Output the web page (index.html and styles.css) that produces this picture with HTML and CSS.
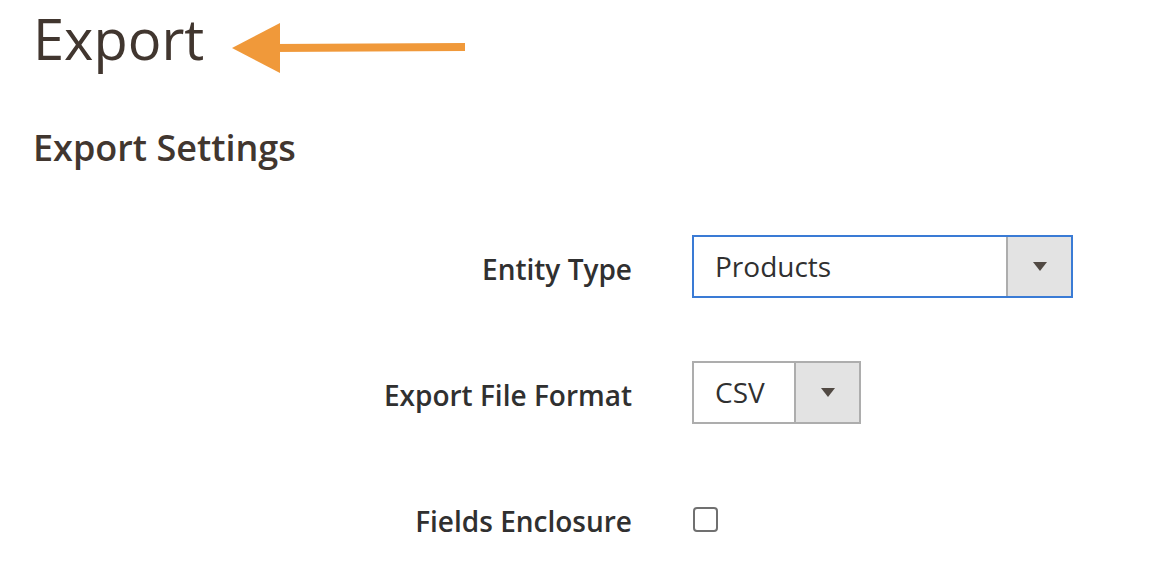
FILE: index.html
```html
<!DOCTYPE html>
<html lang="en">
<head>
    <meta charset="UTF-8">
    <title>Export</title>
    <link rel="stylesheet" href="styles.css">
</head>
<body>

<div class="page">
    <div class="page-header">
        <h1 class="page-title">Export</h1>
        <svg class="pointer" width="240" height="52" viewBox="0 0 240 52">
            <line x1="40" y1="25" x2="233" y2="24" stroke="#f0993a" stroke-width="8"/>
            <polygon points="0,25 48,0 48,50" fill="#f0993a"/>
        </svg>
    </div>

    <h2 class="legend">Export Settings</h2>

    <div class="fieldset">
        <div class="field">
            <label class="label">Entity Type</label>
            <div class="control">
                <div class="select select-wide focused">
                    <span class="select-value">Products</span>
                    <span class="select-btn"><span class="caret"></span></span>
                </div>
            </div>
        </div>

        <div class="field">
            <label class="label">Export File Format</label>
            <div class="control">
                <div class="select select-small">
                    <span class="select-value">CSV</span>
                    <span class="select-btn"><span class="caret"></span></span>
                </div>
            </div>
        </div>

        <div class="field">
            <label class="label">Fields Enclosure</label>
            <div class="control">
                <span class="checkbox"></span>
            </div>
        </div>
    </div>
</div>

</body>
</html>
```

FILE: styles.css
```css
body {
    font-family: "Open Sans", Arial, sans-serif;
    background-color: #fff;
    color: #303030;
    margin: 0;
    padding: 0;
}

.page {
    padding-left: 33px;
}

.page-header {
    display: flex;
    align-items: flex-start;
    padding-top: 8px;
}

.page-title {
    font-size: 56px;
    font-weight: 400;
    line-height: 60px;
    color: #41362f;
    margin: 0;
}

.pointer {
    margin-left: 28px;
    margin-top: 15px;
}

.legend {
    font-size: 36px;
    font-weight: 600;
    line-height: 41px;
    color: #41362f;
    margin: 52px 0 0 0;
}

.fieldset {
    display: flex;
    flex-direction: column;
    gap: 63px;
    margin-top: 67px;
}

.field {
    display: grid;
    grid-template-columns: 599px auto;
    column-gap: 60px;
    align-items: center;
    height: 63px;
}

.label {
    font-size: 28px;
    font-weight: 600;
    color: #303030;
    text-align: right;
    padding-top: 5px;
}

.control {
    display: flex;
    align-items: center;
}

.select {
    display: flex;
    height: 63px;
    box-sizing: border-box;
    border: 2px solid #adadad;
    background: #fff;
}

.select.focused {
    border-color: #3a7bd5;
}

.select-wide {
    width: 381px;
}

.select-small {
    width: 169px;
}

.select-value {
    flex: 1;
    padding-left: 21px;
    font-size: 28px;
    line-height: 59px;
    color: #303030;
}

.select-btn {
    width: 65px;
    box-sizing: border-box;
    background: #e3e3e3;
    border-left: 2px solid #adadad;
    display: flex;
    align-items: center;
    justify-content: center;
}

.caret {
    width: 0;
    height: 0;
    border-left: 7px solid transparent;
    border-right: 7px solid transparent;
    border-top: 9px solid #514943;
}

.checkbox {
    width: 25px;
    height: 25px;
    box-sizing: border-box;
    border: 2px solid #707070;
    border-radius: 4px;
    margin-left: 1px;
    margin-top: 2px;
}
```
